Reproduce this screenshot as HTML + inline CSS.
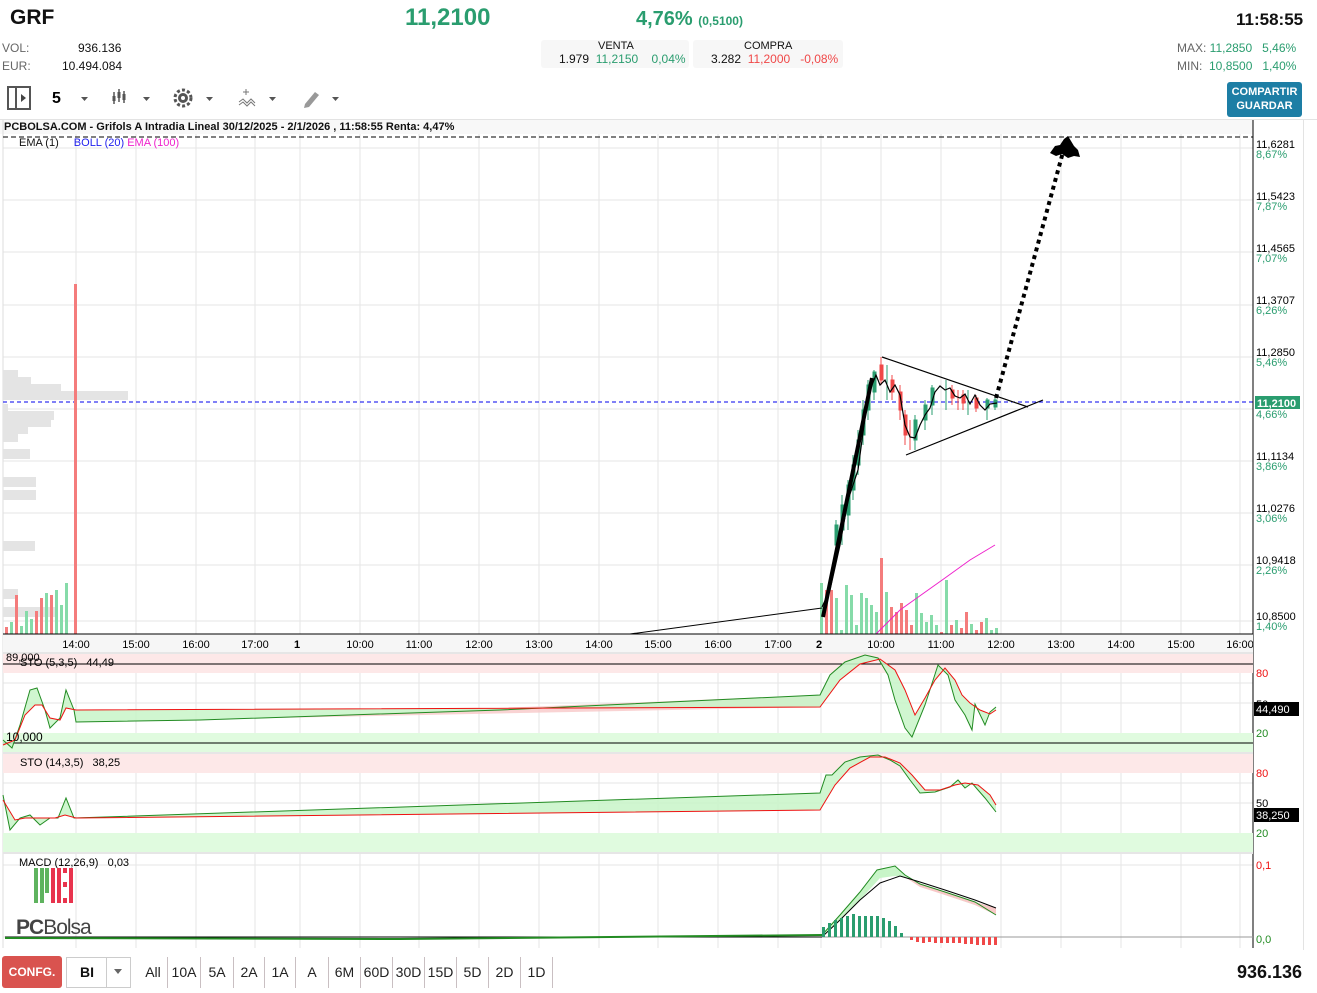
<!DOCTYPE html>
<html><head><meta charset="utf-8"><style>
*{margin:0;padding:0;box-sizing:border-box}
body{width:1317px;height:993px;background:#fff;font-family:"Liberation Sans",sans-serif;position:relative;overflow:hidden;color:#111}
.a{position:absolute;white-space:nowrap}
.g{color:#2a9d6f}.r{color:#f04848}.gr{color:#666}
.btn{position:absolute;top:957px;height:31px;font-size:14px;text-align:center;line-height:31px;color:#222}
.sep{position:absolute;top:957px;width:1px;height:31px;background:#c9bfc2}
</style></head><body>
<div class="a" style="left:10px;top:6px;font-size:21px;font-weight:bold">GRF</div>
<div class="a g" style="left:405px;top:4px;font-size:24px;font-weight:bold">11,2100</div>
<div class="a g" style="left:636px;top:8px;font-size:20px;font-weight:bold">4,76% <span style="font-size:12px">(0,5100)</span></div>
<div class="a" style="left:1236px;top:10px;font-size:17px;font-weight:bold">11:58:55</div>
<div class="a gr" style="left:2px;top:41px;font-size:12px">VOL:</div>
<div class="a" style="left:78px;top:41px;font-size:12px">936.136</div>
<div class="a gr" style="left:2px;top:59px;font-size:12px">EUR:</div>
<div class="a" style="left:62px;top:59px;font-size:12px">10.494.084</div>
<div class="a" style="left:541px;top:40px;width:148px;height:28px;background:#f7f7f7;border-radius:3px"></div>
<div class="a" style="left:598px;top:40px;font-size:11px">VENTA</div>
<div class="a" style="left:559px;top:52px;font-size:12px">1.979 <span class="g">&nbsp;11,2150 &nbsp;&nbsp;&nbsp;0,04%</span></div>
<div class="a" style="left:693px;top:40px;width:150px;height:28px;background:#f7f7f7;border-radius:3px"></div>
<div class="a" style="left:744px;top:40px;font-size:11px">COMPRA</div>
<div class="a" style="left:711px;top:52px;font-size:12px">3.282 <span class="r">&nbsp;11,2000 &nbsp;&nbsp;-0,08%</span></div>
<div class="a gr" style="left:1177px;top:41px;font-size:12px">MAX: <span class="g">11,2850 &nbsp;&nbsp;5,46%</span></div>
<div class="a gr" style="left:1177px;top:59px;font-size:12px">MIN: <span class="g">&nbsp;10,8500 &nbsp;&nbsp;1,40%</span></div>
<div class="a" style="left:1227px;top:82px;width:75px;height:35px;background:#1d7ea5;border-radius:3px;color:#fff;font-size:11px;font-weight:bold;text-align:center;line-height:14px;padding-top:3px">COMPARTIR<br>GUARDAR</div>
<svg class="a" style="left:0;top:80px" width="360" height="40">
<rect x="8" y="7" width="22" height="22" fill="none" stroke="#555" stroke-width="2"/><line x1="16" y1="7" x2="16" y2="29" stroke="#555" stroke-width="2"/><path d="M21 14l5 4-5 4z" fill="#444"/>
<text x="52" y="23" font-size="16" font-weight="bold" font-family="Liberation Sans">5</text>
<path d="M81 17h7l-3.5 4z M143 17h7l-3.5 4z M206 17h7l-3.5 4z M269 17h7l-3.5 4z M332 17h7l-3.5 4z" fill="#555"/>
<g stroke="#555" stroke-width="1.5"><line x1="114" y1="12" x2="114" y2="24"/><line x1="119" y1="9" x2="119" y2="22"/><line x1="124" y1="11" x2="124" y2="23"/></g>
<g fill="#555"><rect x="112.5" y="16" width="3" height="5"/><rect x="117.5" y="12" width="3" height="6"/><rect x="122.5" y="14" width="3" height="6"/></g>
<circle cx="183" cy="18" r="8" fill="none" stroke="#555" stroke-width="3" stroke-dasharray="3 2.2"/><circle cx="183" cy="18" r="5" fill="#555"/><circle cx="183" cy="18" r="2" fill="#fff"/>
<path d="M243 12h6M246 9v6M239 22l4-3 4 4 4-4 4 4M239 25l4-3 4 4 4-4 4 4" stroke="#777" fill="none" stroke-width="1"/>
<path d="M305 24l10-12 4 3-10 12-5 1z" fill="#999"/>
</svg>
<div class="a" style="left:0;top:119px;width:1317px;height:1px;background:#e3e3e3"></div>
<div class="a" style="left:1303px;top:120px;width:1px;height:830px;background:#e3e3e3"></div>
<svg class="a" style="left:0;top:120px" width="1317" height="835" font-family="Liberation Sans">
<g transform="translate(0,-120)">
<rect x="0" y="120" width="1253" height="14" fill="#f8f8f8"/>
<g stroke="#e6e6e6" stroke-width="1">
<path d="M3 148H1253M3 200H1253M3 252H1253M3 305H1253M3 357H1253M3 409H1253M3 461H1253M3 513H1253M3 565H1253M3 621H1253"/>
<path d="M76 134V948M136 134V948M196 134V948M255 134V948M300 134V948M360 134V948M419 134V948M479 134V948M539 134V948M599 134V948M658 134V948M718 134V948M778 134V948M821 134V948M881 134V948M941 134V948M1001 134V948M1061 134V948M1121 134V948M1181 134V948M1240 134V948"/>
<path d="M3 683H1253M3 703H1253M3 783H1253M3 803H1253M3 865H1253M3 937H1253"/>
</g>
<line x1="3" y1="120" x2="3" y2="948" stroke="#ddd"/>
<g fill="#e4e4e4"><rect x="3" y="370" width="15" height="8"/><rect x="3" y="377" width="28" height="7"/><rect x="3" y="384" width="58" height="8"/><rect x="3" y="391" width="125" height="9"/><rect x="3" y="404" width="5" height="8"/><rect x="3" y="411" width="51" height="9"/><rect x="3" y="419" width="48" height="8"/><rect x="3" y="426" width="25" height="8"/><rect x="3" y="434" width="15" height="8"/><rect x="3" y="449" width="27" height="10"/><rect x="3" y="477" width="33" height="10"/><rect x="3" y="490" width="33" height="10"/><rect x="3" y="541" width="32" height="10"/><rect x="3" y="589" width="15" height="10"/><rect x="3" y="607" width="52" height="10"/></g>
<line x1="3" y1="402" x2="1253" y2="402" stroke="#0000ee" stroke-dasharray="4 3"/>
<line x1="3" y1="137" x2="1253" y2="137" stroke="#000" stroke-dasharray="5 3"/>
<rect x="74" y="284" width="3" height="350" fill="#f47c7c"/>
<g><rect x="5" y="627" width="3" height="7" fill="#f47c7c"/><rect x="10" y="622" width="3" height="12" fill="#86dba9"/><rect x="15" y="595" width="3" height="39" fill="#f47c7c"/><rect x="20" y="626" width="3" height="8" fill="#86dba9"/><rect x="25" y="611" width="3" height="23" fill="#86dba9"/><rect x="30" y="619" width="3" height="15" fill="#86dba9"/><rect x="35" y="611" width="3" height="23" fill="#f47c7c"/><rect x="40" y="598" width="3" height="36" fill="#f47c7c"/><rect x="45" y="593" width="3" height="41" fill="#86dba9"/><rect x="50" y="595" width="3" height="39" fill="#f47c7c"/><rect x="55" y="590" width="3" height="44" fill="#86dba9"/><rect x="60" y="605" width="3" height="29" fill="#86dba9"/><rect x="65" y="583" width="3" height="51" fill="#86dba9"/></g>
<g fill="#86dba9">
<rect x="820" y="583" width="3" height="51"/><rect x="835" y="598" width="3" height="36"/><rect x="840" y="630" width="3" height="4"/><rect x="845" y="585" width="3" height="49"/><rect x="850" y="595" width="3" height="39"/><rect x="855" y="625" width="3" height="9"/><rect x="860" y="593" width="3" height="41"/><rect x="865" y="598" width="3" height="36"/><rect x="870" y="605" width="3" height="29"/><rect x="875" y="612" width="3" height="22"/><rect x="885" y="592" width="3" height="42"/><rect x="915" y="593" width="3" height="41"/><rect x="920" y="613" width="3" height="21"/><rect x="925" y="622" width="3" height="12"/><rect x="930" y="615" width="3" height="19"/><rect x="935" y="625" width="3" height="9"/><rect x="945" y="580" width="3" height="54"/><rect x="955" y="620" width="3" height="14"/><rect x="970" y="624" width="3" height="10"/><rect x="985" y="618" width="3" height="16"/><rect x="990" y="630" width="3" height="4"/><rect x="995" y="628" width="3" height="6"/></g>
<g fill="#f47c7c"><rect x="825" y="590" width="3" height="44"/><rect x="830" y="590" width="3" height="44"/><rect x="880" y="558" width="3" height="76"/><rect x="890" y="607" width="3" height="27"/><rect x="895" y="612" width="3" height="22"/><rect x="900" y="603" width="3" height="31"/><rect x="905" y="610" width="3" height="24"/><rect x="910" y="625" width="3" height="9"/><rect x="940" y="632" width="3" height="2"/><rect x="950" y="625" width="3" height="9"/><rect x="960" y="628" width="3" height="6"/><rect x="965" y="612" width="3" height="22"/><rect x="975" y="630" width="3" height="4"/><rect x="980" y="622" width="3" height="12"/></g>
<polyline points="876,634 900,610 945,578 970,560 995,545" fill="none" stroke="#ee22cc" stroke-width="1"/>
<line x1="630" y1="634" x2="822" y2="608" stroke="#000"/>
<g stroke-width="1">
<g stroke="#2a9d6f" fill="#2a9d6f"><path d="M836 520V550M842 495V545M848 480V530M853 455V500M858 430V475M863 400V445M868 380V420M874 370V400M887 365V400M915 415V450M925 400V430M932 385V415M946 380V410M968 390V415M987 398V420M995 398V410"/>
<rect x="835" y="525" width="3" height="20"/><rect x="841" y="505" width="3" height="25"/><rect x="847" y="485" width="3" height="30"/><rect x="852" y="465" width="3" height="25"/><rect x="857" y="440" width="3" height="25"/><rect x="862" y="410" width="3" height="25"/><rect x="867" y="385" width="3" height="25"/><rect x="873" y="372" width="3" height="20"/><rect x="914" y="420" width="3" height="20"/><rect x="924" y="405" width="3" height="15"/><rect x="931" y="388" width="3" height="17"/><rect x="986" y="400" width="3" height="8"/><rect x="994" y="400" width="3" height="7"/></g>
<g stroke="#f04848" fill="#f04848"><path d="M881 357V385M892 375V400M900 385V420M905 410V445M910 420V450M952 385V405M958 390V410M963 390V410M976 395V412"/>
<rect x="880" y="365" width="3" height="15"/><rect x="891" y="380" width="3" height="12"/><rect x="899" y="392" width="3" height="18"/><rect x="904" y="415" width="3" height="20"/><rect x="951" y="390" width="3" height="8"/><rect x="962" y="395" width="3" height="8"/><rect x="975" y="398" width="3" height="10"/></g>
</g>
<polyline points="822,607 830,590 840,545 848,500 858,470 862,440 866,410 870,390 876,375 880,385 885,380 890,392 895,385 900,395 905,425 910,437 915,438 920,425 925,415 930,408 935,392 940,386 945,390 950,388 955,396 960,398 965,394 970,404 975,395 980,405 985,410 990,404 997,403" fill="none" stroke="#000" stroke-width="1.2"/>
<line x1="823" y1="617" x2="872" y2="378" stroke="#000" stroke-width="4"/>
<line x1="882" y1="357" x2="1028" y2="407" stroke="#000" stroke-width="1.2"/>
<line x1="906" y1="455" x2="1043" y2="400" stroke="#000" stroke-width="1.2"/>
<line x1="996" y1="398" x2="1063" y2="152" stroke="#000" stroke-width="4" stroke-dasharray="4 4"/>
<path d="M1050 153L1055 146L1060 145L1064 139L1068 136L1071 141L1074 146L1078 150L1080 157L1074 156L1068 158L1062 154L1056 156Z" fill="#000"/>
<g font-size="11"><text x="1256" y="148">11,6281</text><text x="1256" y="200">11,5423</text><text x="1256" y="252">11,4565</text><text x="1256" y="304">11,3707</text><text x="1256" y="356">11,2850</text><text x="1256" y="460">11,1134</text><text x="1256" y="512">11,0276</text><text x="1256" y="564">10,9418</text><text x="1256" y="620">10,8500</text></g>
<g font-size="11" fill="#2a9d6f"><text x="1256" y="158">8,67%</text><text x="1256" y="210">7,87%</text><text x="1256" y="262">7,07%</text><text x="1256" y="314">6,26%</text><text x="1256" y="366">5,46%</text><text x="1256" y="418">4,66%</text><text x="1256" y="470">3,86%</text><text x="1256" y="522">3,06%</text><text x="1256" y="574">2,26%</text><text x="1256" y="630">1,40%</text></g>
<rect x="1255" y="396" width="45" height="13" fill="#2a9d6f"/><text x="1257" y="407" font-size="11" fill="#fff" font-weight="bold">11,2100</text>
<line x1="1253" y1="120" x2="1253" y2="948" stroke="#000"/>
<rect x="3" y="634" width="1250" height="18" fill="#f6f6f6"/>
<line x1="3" y1="634" x2="1253" y2="634" stroke="#000"/>
<g font-size="11" text-anchor="middle"><text x="76" y="648">14:00</text><text x="136" y="648">15:00</text><text x="196" y="648">16:00</text><text x="255" y="648">17:00</text><text x="297" y="648" font-weight="bold">1</text><text x="360" y="648">10:00</text><text x="419" y="648">11:00</text><text x="479" y="648">12:00</text><text x="539" y="648">13:00</text><text x="599" y="648">14:00</text><text x="658" y="648">15:00</text><text x="718" y="648">16:00</text><text x="778" y="648">17:00</text><text x="819" y="648" font-weight="bold">2</text><text x="881" y="648">10:00</text><text x="941" y="648">11:00</text><text x="1001" y="648">12:00</text><text x="1061" y="648">13:00</text><text x="1121" y="648">14:00</text><text x="1181" y="648">15:00</text><text x="1240" y="648">16:00</text></g>
<rect x="3" y="652" width="1250" height="2" fill="#e6e6e6"/>
<!-- STO1 -->
<rect x="3" y="654" width="1250" height="19" fill="#fde8e8"/><rect x="3" y="733" width="1250" height="19" fill="#e0fbdf"/>
<line x1="3" y1="664" x2="1253" y2="664" stroke="#000"/><line x1="3" y1="743" x2="1253" y2="743" stroke="#000"/>
<path d="M76 722L820 707L820 695L200 720Z" fill="#f8c8c8" opacity="0.8"/>
<path d="M3 740L12 748L20 725L30 690L37 688L45 710L50 728L60 718L66 690L74 710L76 722L200 720L500 710L820 695L830 675L845 662L865 655L878 658L888 675L895 700L905 728L912 737L925 705L938 665L948 675L955 700L965 715L972 730L975 704L985 725L990 712L996 707L996 710L990 714L980 710L970 703L962 695L955 680L945 668L935 680L925 698L915 715L905 690L895 670L880 659L860 664L840 680L820 707L76 710L66 708L60 720L50 718L42 705L35 705L25 715L15 740L3 745Z" fill="#c8f5c8" opacity="0.85"/>
<path d="M3 740L12 748L20 725L30 690L37 688L45 710L50 728L60 718L66 690L74 710L76 722L200 720L500 710L820 695L830 675L845 662L865 655L878 658L888 675L895 700L905 728L912 737L925 705L938 665L948 675L955 700L965 715L972 730L975 704L985 725L990 712L996 707" fill="none" stroke="#228b22" stroke-width="1"/>
<path d="M3 745L15 740L25 715L35 705L42 705L50 718L60 720L66 708L76 710L820 707L840 680L860 664L880 659L895 670L905 690L915 715L925 698L935 680L945 668L955 680L962 695L970 703L980 710L990 714L996 710" fill="none" stroke="#ee1111" stroke-width="1"/>
<text x="6" y="661" font-size="11">89,000</text><text x="20" y="666" font-size="11">STO (5,3,5) &nbsp;&nbsp;44,49</text>
<text x="6" y="741" font-size="12">10,000</text>
<text x="1256" y="677" font-size="11" fill="#ee1111">80</text><text x="1256" y="708" font-size="11">50</text><text x="1256" y="737" font-size="11" fill="#228b22">20</text>
<rect x="1254" y="702" width="45" height="14" fill="#000"/><text x="1256" y="713" font-size="11" fill="#fff">44,490</text>
<rect x="3" y="752" width="1250" height="2" fill="#e6e6e6"/>
<!-- STO2 -->
<rect x="3" y="754" width="1250" height="19" fill="#fde8e8"/><rect x="3" y="833" width="1250" height="19" fill="#e0fbdf"/>
<path d="M3 795L10 830L20 818L30 815L40 825L50 818L58 818L66 798L74 818L820 793L826 775L832 775L845 762L860 757L878 755L890 760L900 766L910 780L920 793L935 792L950 787L958 780L965 788L972 783L978 790L985 798L996 812L996 805L990 795L978 785L965 783L955 785L940 790L925 790L912 775L900 763L885 757L870 757L850 768L835 785L820 810L76 818L65 815L55 818L40 818L25 818L15 820L3 800Z" fill="#c8f5c8" opacity="0.85"/>
<path d="M3 795L10 830L20 818L30 815L40 825L50 818L58 818L66 798L74 818L820 793L826 775L832 775L845 762L860 757L878 755L890 760L900 766L910 780L920 793L935 792L950 787L958 780L965 788L972 783L978 790L985 798L996 812" fill="none" stroke="#228b22" stroke-width="1"/>
<path d="M3 800L15 820L25 818L40 818L55 818L65 815L76 818L820 810L835 785L850 768L870 757L885 757L900 763L912 775L925 790L940 790L955 785L965 783L978 785L990 795L996 805" fill="none" stroke="#ee1111" stroke-width="1"/>
<text x="20" y="766" font-size="11">STO (14,3,5) &nbsp;&nbsp;38,25</text>
<text x="1256" y="777" font-size="11" fill="#ee1111">80</text><text x="1256" y="807" font-size="11">50</text><text x="1256" y="837" font-size="11" fill="#228b22">20</text>
<rect x="1254" y="808" width="45" height="14" fill="#000"/><text x="1256" y="819" font-size="11" fill="#fff">38,250</text>
<rect x="3" y="852" width="1250" height="2" fill="#e6e6e6"/>
<!-- MACD -->
<path d="M822 935L840 915L860 892L877 870L895 866L905 875L920 884L945 892L975 902L996 908L996 915L975 905L945 895L905 877L895 876L880 878L860 900L840 920L822 937Z" fill="#c8f5c8"/>
<path d="M905 877L920 884L945 892L975 902L996 908L996 915L975 905L945 895L920 887Z" fill="#f8c8c8"/>
<path d="M822 935L840 915L860 892L877 870L895 866L905 875L920 884L945 892L975 902L996 915" fill="none" stroke="#228b22"/>
<path d="M5 937L822 937L840 920L860 900L880 883L900 876L920 882L945 890L975 900L996 908" fill="none" stroke="#000"/>
<path d="M5 938L400 939L822 935" fill="none" stroke="#228b22" stroke-width="2"/>
<line x1="822" y1="937" x2="1253" y2="937" stroke="#999"/>
<g fill="#2a9d6f"><rect x="822" y="927" width="3" height="10"/><rect x="828" y="923" width="3" height="14"/><rect x="834" y="920" width="3" height="17"/><rect x="840" y="918" width="3" height="19"/><rect x="846" y="916" width="3" height="21"/><rect x="852" y="914" width="3" height="23"/><rect x="858" y="916" width="3" height="21"/><rect x="864" y="916" width="3" height="21"/><rect x="870" y="916" width="3" height="21"/><rect x="876" y="916" width="3" height="21"/><rect x="882" y="918" width="3" height="19"/><rect x="888" y="921" width="3" height="16"/><rect x="894" y="926" width="3" height="11"/><rect x="900" y="933" width="3" height="4"/></g>
<g fill="#f04848"><rect x="910" y="937" width="3" height="3"/><rect x="916" y="937" width="3" height="5"/><rect x="922" y="937" width="3" height="6"/><rect x="928" y="937" width="3" height="5"/><rect x="934" y="937" width="3" height="6"/><rect x="940" y="937" width="3" height="6"/><rect x="946" y="937" width="3" height="6"/><rect x="952" y="937" width="3" height="6"/><rect x="958" y="937" width="3" height="6"/><rect x="964" y="937" width="3" height="7"/><rect x="970" y="937" width="3" height="7"/><rect x="976" y="937" width="3" height="8"/><rect x="982" y="937" width="3" height="8"/><rect x="988" y="937" width="3" height="8"/><rect x="994" y="937" width="3" height="8"/></g>
<text x="19" y="866" font-size="11">MACD (12,26,9) &nbsp;&nbsp;0,03</text>
<text x="1256" y="869" font-size="11" fill="#ee1111">0,1</text><text x="1256" y="943" font-size="11" fill="#228b22">0,0</text>
<g fill="#5fb35f"><rect x="34" y="868" width="4" height="35"/><rect x="40" y="868" width="4" height="35"/><rect x="45" y="868" width="4" height="25"/></g>
<g fill="#e8334d"><rect x="51" y="868" width="4" height="35"/><rect x="57" y="868" width="4" height="35"/><rect x="63" y="868" width="4" height="5"/><rect x="63" y="898" width="4" height="5"/><rect x="69" y="868" width="4" height="35"/><rect x="63" y="882" width="4" height="5"/></g>
<text x="16" y="934" font-size="21" fill="#444" letter-spacing="-1"><tspan font-weight="bold">PC</tspan>Bolsa</text>
<rect x="3" y="948" width="1250" height="6" fill="#fff"/>
</g></svg>
<div class="a" style="left:4px;top:121px;font-size:11px;font-weight:bold">PCBOLSA.COM - Grifols A Intradia Lineal 30/12/2025 - 2/1/2026 , 11:58:55 Renta: 4,47%</div>
<div class="a" style="left:19px;top:137px;font-size:11px">EMA (1) <span style="color:#2222ee;margin-left:12px">BOLL (20)</span> <span style="color:#ee22cc">EMA (100)</span></div>
<div class="a" style="left:2px;top:956px;width:60px;height:32px;background:#d9534f;border-radius:3px;color:#fff;font-size:12px;font-weight:bold;text-align:center;line-height:32px">CONFG.</div>
<div class="a" style="left:66px;top:957px;width:65px;height:31px;border:1px solid #ccc"></div>
<div class="a" style="left:106px;top:957px;width:1px;height:31px;background:#ccc"></div>
<div class="a" style="left:80px;top:964px;font-size:14px;font-weight:bold">BI</div>
<div class="a" style="left:114px;top:969px;border-left:4px solid transparent;border-right:4px solid transparent;border-top:5px solid #666"></div>
<div class="btn" style="left:142px;width:22px">All</div><div class="sep" style="left:167px"></div>
<div class="btn" style="left:168px;width:32px">10A</div><div class="sep" style="left:200px"></div>
<div class="btn" style="left:201px;width:32px">5A</div><div class="sep" style="left:233px"></div>
<div class="btn" style="left:234px;width:30px">2A</div><div class="sep" style="left:264px"></div>
<div class="btn" style="left:265px;width:30px">1A</div><div class="sep" style="left:295px"></div>
<div class="btn" style="left:296px;width:32px">A</div><div class="sep" style="left:328px"></div>
<div class="btn" style="left:329px;width:31px">6M</div><div class="sep" style="left:360px"></div>
<div class="btn" style="left:361px;width:31px">60D</div><div class="sep" style="left:392px"></div>
<div class="btn" style="left:393px;width:31px">30D</div><div class="sep" style="left:424px"></div>
<div class="btn" style="left:425px;width:31px">15D</div><div class="sep" style="left:456px"></div>
<div class="btn" style="left:457px;width:31px">5D</div><div class="sep" style="left:488px"></div>
<div class="btn" style="left:489px;width:31px">2D</div><div class="sep" style="left:520px"></div>
<div class="btn" style="left:521px;width:31px">1D</div><div class="sep" style="left:552px"></div>
<div class="a" style="left:1237px;top:962px;font-size:18px;font-weight:bold">936.136</div>
</body></html>
